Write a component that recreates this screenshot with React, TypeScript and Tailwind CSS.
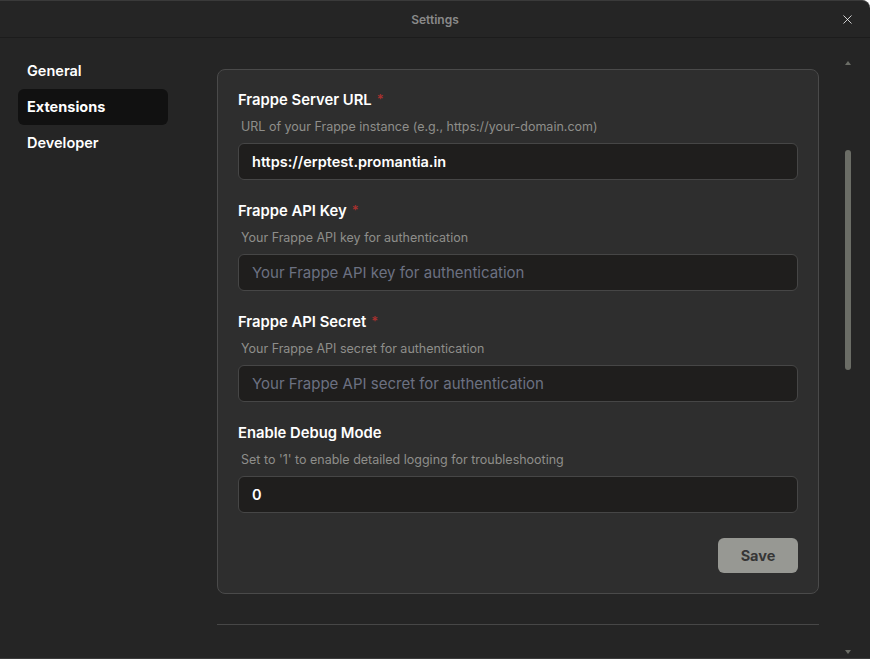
import { X } from 'lucide-react'

const FONT = { fontFamily: 'Inter, "Noto Sans", sans-serif' }

type Field = {
  label: string
  required?: boolean
  hint: string
  value?: string
  placeholder?: string
}

const FIELDS: Field[] = [
  {
    label: 'Frappe Server URL',
    required: true,
    hint: 'URL of your Frappe instance (e.g., https://your-domain.com)',
    value: 'https://erptest.promantia.in',
  },
  {
    label: 'Frappe API Key',
    required: true,
    hint: 'Your Frappe API key for authentication',
    placeholder: 'Your Frappe API key for authentication',
  },
  {
    label: 'Frappe API Secret',
    required: true,
    hint: 'Your Frappe API secret for authentication',
    placeholder: 'Your Frappe API secret for authentication',
  },
  {
    label: 'Enable Debug Mode',
    hint: "Set to '1' to enable detailed logging for troubleshooting",
    value: '0',
  },
]

const NAV = ['General', 'Extensions', 'Developer']

function SettingField({ field, first }: { field: Field; first: boolean }) {
  return (
    <div className={first ? 'flex flex-col' : 'mt-[21px] flex flex-col'}>
      <div className="flex h-5 items-center gap-[5px] text-[14.8px] font-semibold text-white">
        {field.label}
        {field.required && <span className="text-[13px] text-[#a8312f]">*</span>}
      </div>
      <div className="mt-2 h-[18px] pl-[3px] text-[12.5px] leading-[18px] text-[#8e8e8b]">
        {field.hint}
      </div>
      <input
        className="mt-[7px] h-[37px] w-full rounded-md border border-[#464646] bg-[#1f1e1d] px-[13px] text-[14.5px] font-semibold text-white outline-none placeholder:text-[15px] placeholder:font-normal placeholder:text-[#6c7182]"
        style={FONT}
        defaultValue={field.value}
        placeholder={field.placeholder}
      />
    </div>
  )
}

export default function App() {
  return (
    <div
      className="flex h-[659px] w-[870px] flex-col overflow-hidden rounded-tr-lg border-t border-b border-[#3a3a3a] bg-[#252525]"
      style={FONT}
    >
      <header className="relative flex h-[37px] flex-none items-center justify-center border-b border-[#1c1c1c]">
        <span className="mt-[2px] text-[12px] font-semibold text-[#8a8a8a]">Settings</span>
        <button className="absolute right-[15px] top-[11px] text-white">
          <X size={15} strokeWidth={1.25} />
        </button>
      </header>

      <div className="flex min-h-0 flex-1">
        <nav className="flex w-[217px] flex-none flex-col px-[18px] pt-[15px]">
          {NAV.map((item) => (
            <div
              key={item}
              className={
                item === 'Extensions'
                  ? 'flex h-9 w-[150px] items-center rounded-md bg-[#111111] px-[9px] text-[14.5px] font-bold text-white'
                  : 'flex h-9 w-[150px] items-center px-[9px] text-[14.5px] font-semibold text-white'
              }
            >
              {item}
            </div>
          ))}
        </nav>

        <main className="flex w-[602px] flex-none flex-col pt-[31px]">
          <section className="flex flex-col rounded-lg border border-[#4a4a4a] bg-[#2e2e2e] px-5 pb-5 pt-5">
            {FIELDS.map((f, i) => (
              <SettingField key={f.label} field={f} first={i === 0} />
            ))}
            <div className="mt-[25px] flex justify-end">
              <button className="h-[35px] w-[80px] rounded-md bg-[#979893] text-[14.5px] font-bold text-[#363636]">
                Save
              </button>
            </div>
          </section>
          <div className="mt-[30px] h-px bg-[#474747]" />
        </main>

        <div className="flex w-[51px] flex-none justify-end pr-[17px]">
          <div className="flex w-[10px] flex-col items-center">
            <svg width="8" height="6" viewBox="0 0 8 6" className="mt-[22px]">
              <path d="M4 1 L7 5 L1 5 Z" fill="#6b6d66" />
            </svg>
            <div className="mt-[84px] h-[220px] w-[6px] rounded-full bg-[#6b6d66]" />
            <div className="flex-1" />
            <svg width="8" height="6" viewBox="0 0 8 6" className="mb-[3px]">
              <path d="M1 1 L7 1 L4 5 Z" fill="#6b6d66" />
            </svg>
          </div>
        </div>
      </div>
    </div>
  )
}
